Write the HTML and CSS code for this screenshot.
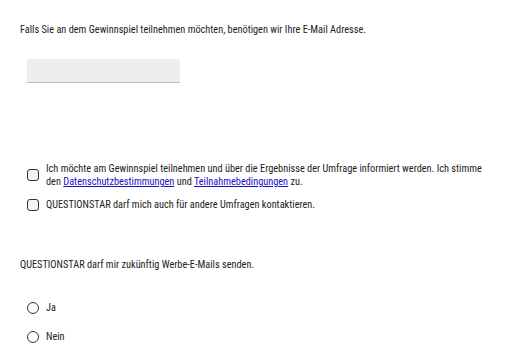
FILE: index.html
```html
<!DOCTYPE html>
<html lang="de">
<head>
  <meta charset="UTF-8" />
  <meta name="viewport" content="width=device-width, initial-scale=1.0"/>
  <title>Gewinnspiel</title>
  <link rel="stylesheet" href="styles.css">
</head>
<body>
  <div class="survey">
    <div class="question">
      <p class="label">Falls Sie an dem Gewinnspiel teilnehmen möchten, benötigen wir Ihre E-Mail Adresse.</p>
      <input type="email" class="field" />
    </div>

    <div class="consents">
      <label class="check">
        <span class="box"></span>
        <span>Ich möchte am Gewinnspiel teilnehmen und über die Ergebnisse der Umfrage informiert werden. Ich stimme den <a href="#">Datenschutzbestimmungen</a> und <a href="#">Teilnahmebedingungen</a> zu.</span>
      </label>
      <label class="check">
        <span class="box"></span>
        <span>QUESTIONSTAR darf mich auch für andere Umfragen kontaktieren.</span>
      </label>
    </div>

    <div class="question optin">
      <p class="label">QUESTIONSTAR darf mir zukünftig Werbe-E-Mails senden.</p>
      <label class="radio"><span class="circle"></span>Ja</label>
      <label class="radio"><span class="circle"></span>Nein</label>
    </div>
  </div>
</body>
</html>
```

FILE: styles.css
```css
body {
  margin: 0;
  background: #fff;
  color: #222;
  font-family: "Roboto Condensed", Roboto, "Liberation Sans", sans-serif;
  font-size: 10.3px;
  line-height: 13px;
}
.survey {
  padding: 23px 20px 0 20px;
}
.label {
  margin: 0;
}
.field {
  display: block;
  box-sizing: border-box;
  width: 153px;
  height: 24px;
  margin: 23px 0 0 7px;
  border: none;
  border-bottom: 1px solid #b3bec6;
  border-radius: 3px 3px 0 0;
  background: #eee;
}
.consents {
  margin: 79px 0 0 7px;
}
.check {
  display: flex;
  align-items: center;
  gap: 7px;
  margin-bottom: 10px;
}
.box {
  flex: none;
  width: 10px;
  height: 10px;
  border: 1.5px solid #333;
  border-radius: 3px;
  background: #f4f4f4;
}
a {
  color: #1a0dcc;
}
.optin {
  margin-top: 47px;
}
.radio {
  display: flex;
  align-items: center;
  gap: 7px;
  margin: 0 0 16px 7px;
}
.optin .label {
  margin-bottom: 30px;
}
.circle {
  width: 10px;
  height: 10px;
  border: 1.5px solid #333;
  border-radius: 50%;
}
```
